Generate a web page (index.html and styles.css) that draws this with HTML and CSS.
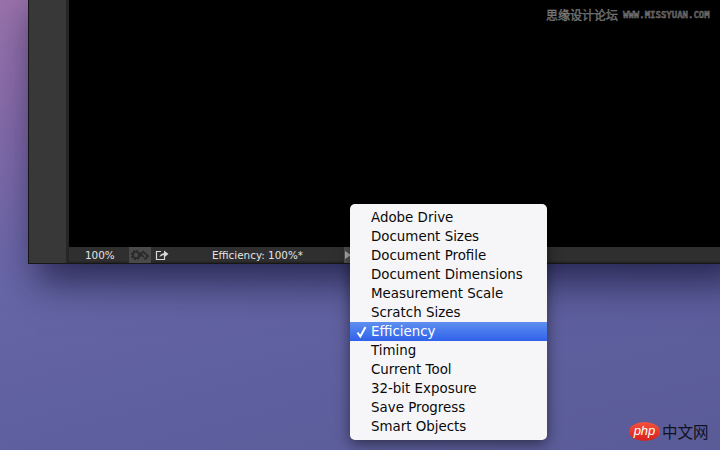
FILE: index.html
```html
<!DOCTYPE html>
<html lang="en">
<head>
<meta charset="utf-8">
<title>Efficiency menu</title>
<link rel="stylesheet" href="styles.css">
</head>
<body>
<div class="desktop">
  <div class="window">
    <div class="toolbar"></div>
    <div class="work">
      <div class="canvas"></div>
      <div class="status">
        <span class="zoom">100%</span>
        <span class="btn">
          <svg class="gears" width="20" height="12" viewBox="0 0 20 12">
            <circle cx="6" cy="6" r="4" fill="none" stroke="#2a2a2a" stroke-width="2.200" stroke-dasharray="2 1.100"/>
            <circle cx="6" cy="6" r="3" fill="none" stroke="#2a2a2a" stroke-width="1.600"/>
            <path d="M14 2 10.500 5.500 14 8M14 3.500 18 7 14.500 10.500" fill="none" stroke="#2a2a2a" stroke-width="1.800"/>
          </svg>
        </span>
        <svg class="share" width="14" height="12" viewBox="0 0 14 12">
          <path d="M6 2.500H1.500v8h8V7" fill="none" stroke="#d8d8d8" stroke-width="1.200"/>
          <path d="M4.500 8C5 5.500 7 4.200 9 4.200V1.500L13.500 5 9 8.500V6.200C7.500 6.200 6 6.800 4.500 8Z" fill="#d8d8d8"/>
        </svg>
        <span class="info">Efficiency: 100%*</span>
        <span class="arrow-cell"><span class="arrow"></span></span>
      </div>
    </div>
  </div>
  <ul class="menu">
    <li>Adobe Drive</li>
    <li>Document Sizes</li>
    <li>Document Profile</li>
    <li>Document Dimensions</li>
    <li>Measurement Scale</li>
    <li>Scratch Sizes</li>
    <li class="sel">
      <svg class="check" width="11" height="12" viewBox="0 0 11 12"><path d="M1.500 6.500 4.300 10.500 9.500 1" fill="none" stroke="#fff" stroke-width="2"/></svg>Efficiency
    </li>
    <li>Timing</li>
    <li>Current Tool</li>
    <li>32-bit Exposure</li>
    <li>Save Progress</li>
    <li>Smart Objects</li>
  </ul>
  <div class="mark"><span class="mark-cn">思缘设计论坛</span><span class="mark-en">WWW.MISSYUAN.COM</span></div>
  <div class="logo"><span class="php">php</span><span class="cn">中文网</span></div>
</div>
</body>
</html>
```
FILE: styles.css
```css
* { box-sizing: border-box; }
html, body { margin: 0; padding: 0; }
body { width: 720px; height: 450px; overflow: hidden; }
.desktop {
  position: relative;
  width: 720px;
  height: 450px;
  padding-left: 28px;
  background: linear-gradient(165deg, #9a72aa 0, #8069a8 22%, #6666a6 45%, #5e5f9e 70%, #5a5c98 100%);
  overflow: hidden;
}
.window {
  width: 700px;
  height: 264px;
  background: #383838;
  border: 1px solid #161616;
  border-top: 0;
  border-right: 0;
  display: flex;
  box-shadow: 12px 14px 36px 4px rgba(16, 16, 50, .7);
}
.toolbar {
  width: 40px;
  background: #383838;
  border-right: 3px solid #262626;
}
.work { flex: 1; min-width: 0; display: flex; flex-direction: column; }
.canvas { flex: 1; background: #000; }
.status {
  height: 16px;
  display: flex;
  align-items: center;
  background: linear-gradient(#2f2f2f 85%, #222);
  color: #e4e4e4;
  font: 10.4px "DejaVu Sans", sans-serif;
}
.zoom { width: 60px; padding-left: 16px; }
.btn {
  width: 22px;
  height: 16px;
  background: #4a4a4a;
  display: flex;
  align-items: center;
  justify-content: center;
}
.share { margin-left: 4px; }
.info { margin-left: 43px; width: 132px; }
.arrow-cell {
  width: 8px;
  height: 16px;
  background: #525252;
  display: flex;
  align-items: center;
  justify-content: center;
}
.arrow {
  border-left: 6px solid #b0b0b0;
  border-top: 4px solid transparent;
  border-bottom: 4px solid transparent;
}
.menu {
  position: absolute;
  left: 350px;
  top: 204px;
  width: 197px;
  height: 236px;
  margin: 0;
  padding: 4px 0;
  list-style: none;
  background: #f6f6f9;
  border-radius: 5px;
  box-shadow: 0 4px 14px rgba(0, 0, 0, .5);
  font: 13.4px/19px "DejaVu Sans", sans-serif;
  color: #0a0a0a;
}
.menu li {
  position: relative;
  height: 19px;
  padding-left: 21px;
}
.menu .sel {
  background: linear-gradient(#5f8ff0, #2f62ea);
  color: #fff;
}
.check { position: absolute; left: 6px; top: 4px; }
.mark {
  position: absolute;
  left: 546px;
  top: 8px;
  display: flex;
  align-items: center;
  color: #4a4a4a;
}
.mark-cn { font: 12px/14px "Noto Sans CJK SC", sans-serif; -webkit-text-stroke: .4px #8a8a8a; }
.mark-en { margin-left: 5px; font: bold 9px/14px "DejaVu Sans Mono", monospace; -webkit-text-stroke: .35px #8a8a8a; }
.logo {
  position: absolute;
  left: 629px;
  top: 421px;
  display: flex;
  align-items: center;
}
.php {
  width: 31px;
  height: 19px;
  border-radius: 50%;
  background: linear-gradient(#f4523a, #d8201e);
  color: #fff;
  font: italic 13px/17px "Liberation Sans", sans-serif;
  text-align: center;
}
.cn {
  margin-left: 2px;
  font: 15.5px/20px "Noto Sans CJK SC", sans-serif;
  color: #111122;
}
```
